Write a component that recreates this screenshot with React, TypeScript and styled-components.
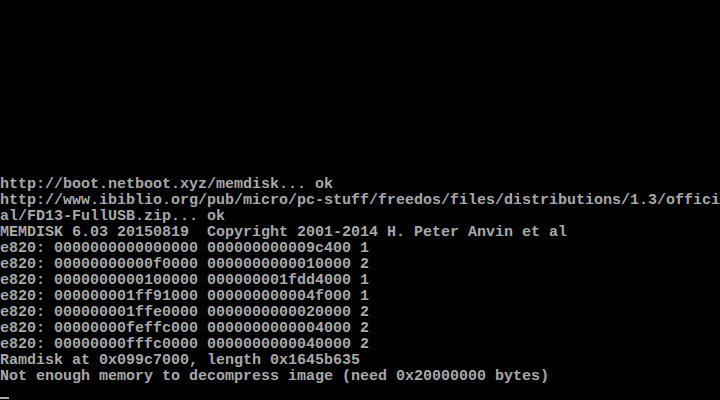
import React from "react";
import styled, { createGlobalStyle } from "styled-components";

const Global = createGlobalStyle`
  html, body { margin: 0; padding: 0; background: #000; }
  body { overflow: hidden; }
`;

const Screen = styled.div`
  width: 720px;
  height: 400px;
  background: #000;
  box-sizing: border-box;
  padding-top: 176px;
  display: flex;
  flex-direction: column;
  overflow: hidden;
`;

const Line = styled.div`
  height: 16px;
  line-height: 16px;
  padding-top: 1px;
  box-sizing: border-box;
  font-family: "Liberation Mono", "DejaVu Sans Mono", monospace;
  font-size: 15px;
  font-weight: bold;
  color: #a8a8a8;
  white-space: pre;
  overflow: hidden;
`;

const CursorRow = styled.div`
  height: 16px;
  padding-top: 13px;
  box-sizing: border-box;
`;

const Cursor = styled.div`
  width: 9px;
  height: 2px;
  background: #a8a8a8;
`;

const lines = [
  "http://boot.netboot.xyz/memdisk... ok",
  "http://www.ibiblio.org/pub/micro/pc-stuff/freedos/files/distributions/1.3/offici",
  "al/FD13-FullUSB.zip... ok",
  "MEMDISK 6.03 20150819  Copyright 2001-2014 H. Peter Anvin et al",
  "e820: 0000000000000000 000000000009c400 1",
  "e820: 00000000000f0000 0000000000010000 2",
  "e820: 0000000000100000 000000001fdd4000 1",
  "e820: 000000001ff91000 000000000004f000 1",
  "e820: 000000001ffe0000 0000000000020000 2",
  "e820: 00000000feffc000 0000000000004000 2",
  "e820: 00000000fffc0000 0000000000040000 2",
  "Ramdisk at 0x099c7000, length 0x1645b635",
  "Not enough memory to decompress image (need 0x20000000 bytes)",
];

export default function App() {
  return (
    <>
      <Global />
      <Screen>
        {lines.map((l, i) => (
          <Line key={i}>{l}</Line>
        ))}
        <CursorRow>
          <Cursor />
        </CursorRow>
      </Screen>
    </>
  );
}
